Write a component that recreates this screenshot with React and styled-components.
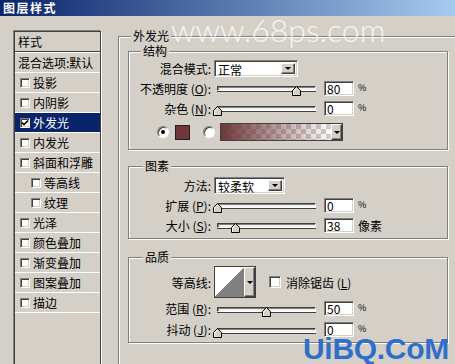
import React from "react";
import styled, { createGlobalStyle } from "styled-components";

const GlobalStyle = createGlobalStyle`
  html, body { margin: 0; padding: 0; background: #d4d0c8; }
  body {
    font-family: "Noto Sans CJK SC", "DejaVu Sans", sans-serif;
    font-size: 12px;
    color: #000;
  }
`;

const Window = styled.div`
  position: relative;
  width: 455px;
  height: 364px;
  overflow: hidden;
  background: #d4d0c8;
`;

const TitleBar = styled.div`
  display: flex;
  align-items: center;
  height: 16px;
  padding-left: 3px;
  background: linear-gradient(to right, #0a246a, #a6caf0);
  color: #fff;
  font-weight: bold;
  font-size: 12px;
  letter-spacing: 1.5px;
  line-height: 16px;
`;

const Body = styled.div`
  display: flex;
  align-items: flex-start;
  padding: 15px 0 0 14px;
`;

const StyleList = styled.div`
  flex: none;
  width: 85px;
  height: 340px;
  border: 1px solid #404040;
  box-shadow: -1px -1px 0 #808080, 1px 1px 0 #fff;
`;

const ListHeader = styled.div`
  height: 19px;
  line-height: 19px;
  padding-left: 3px;
  border-bottom: 1px solid #404040;
  box-shadow: 0 1px 0 #fff;
  margin-bottom: 1px;
`;

const ListItem = styled.div`
  display: flex;
  align-items: center;
  height: 19px;
  padding-left: ${(p) => p.$indent}px;
  border-bottom: 1px solid #fff;
  white-space: nowrap;
  background: ${(p) => (p.$active ? "#0a246a" : "transparent")};
  color: ${(p) => (p.$active ? "#fff" : "#000")};
`;

const Box = styled.span`
  flex: none;
  display: inline-flex;
  align-items: center;
  justify-content: center;
  box-sizing: border-box;
  width: ${(p) => p.$size}px;
  height: ${(p) => p.$size}px;
  margin-right: ${(p) => p.$gap}px;
  background: #fff;
  border: 1px solid;
  border-color: #808080 #fff #fff #808080;
  box-shadow: inset 1px 1px 0 #404040, inset -1px -1px 0 #d4d0c8;
`;

const Panel = styled.fieldset`
  flex: none;
  margin: -1px 0 0 17px;
  padding: 0 0 0 9px;
  width: 352px;
  height: 400px;
  min-width: 0;
  border: 1px solid #808080;
  box-shadow: inset 1px 1px 0 #fff, 1px 1px 0 #fff;
`;

const Legend = styled.legend`
  margin-left: ${(p) => p.$offset}px;
  padding: 0 2px;
  line-height: 12px;
  background: #d4d0c8;
`;

const Group = styled.fieldset`
  margin: ${(p) => p.$top}px 0 0 0;
  padding: ${(p) => p.$pt}px 0 ${(p) => p.$pb}px 0;
  width: 318px;
  min-width: 0;
  border: 1px solid #808080;
  box-shadow: inset 1px 1px 0 #fff, 1px 1px 0 #fff;
`;

const Row = styled.div`
  display: flex;
  align-items: center;
  height: ${(p) => p.$h || 20}px;
`;

const Label = styled.span`
  flex: none;
  width: 82px;
  margin-right: 3px;
  text-align: right;
  white-space: nowrap;
`;

const Select = styled.div`
  flex: none;
  display: flex;
  box-sizing: border-box;
  width: ${(p) => p.$w}px;
  height: 17px;
  padding: 2px;
  background: #fff;
  border: 1px solid;
  border-color: #808080 #fff #fff #808080;
  box-shadow: inset 1px 1px 0 #404040, inset -1px -1px 0 #d4d0c8;
`;

const SelectText = styled.span`
  flex: 1;
  line-height: 13px;
  padding-left: 1px;
`;

const DropButton = styled.span`
  flex: none;
  display: flex;
  align-items: center;
  justify-content: center;
  box-sizing: border-box;
  width: ${(p) => p.$w || 14}px;
  background: #d4d0c8;
  border: 1px solid;
  border-color: #fff #404040 #404040 #fff;
  box-shadow: inset -1px -1px 0 #808080;
  &::after {
    content: "";
    border-left: 3px solid transparent;
    border-right: 3px solid transparent;
    border-top: 3px solid #000;
  }
`;

const Slider = styled.div`
  flex: none;
  position: relative;
  width: 106px;
  height: 20px;
  margin-right: 4px;
`;

const Track = styled.div`
  box-sizing: border-box;
  width: 99px;
  height: 5px;
  margin: 8px 0 0 3px;
  background: #f2f2f2;
  border: 1px solid;
  border-color: #404040 #fff #fff #404040;
  box-shadow: inset 1px 1px 0 #808080, 0 1px 0 #404040;
`;

const Thumb = styled.svg`
  position: absolute;
  top: 8px;
  width: 9px;
  height: 10px;
`;

const NumberBox = styled.div`
  flex: none;
  box-sizing: border-box;
  width: 30px;
  height: 15px;
  padding-left: 2px;
  line-height: 13px;
  background: #fff;
  border: 1px solid;
  border-color: #808080 #fff #fff #808080;
  box-shadow: inset 1px 1px 0 #404040, inset -1px -1px 0 #d4d0c8;
`;

const Unit = styled.span`
  margin-left: 4px;
  font-size: ${(p) => (p.$small ? 9 : 12)}px;
  align-self: ${(p) => (p.$small ? "flex-start" : "center")};
  margin-top: ${(p) => (p.$small ? 3 : 0)}px;
`;

const ColorRow = styled.div`
  display: flex;
  align-items: center;
  height: 18px;
  margin-top: 5px;
  padding-left: 28px;
`;

const Radio = styled.span`
  flex: none;
  position: relative;
  box-sizing: border-box;
  width: 12px;
  height: 12px;
  margin-right: ${(p) => p.$gap}px;
  border-radius: 50%;
  background: #fff;
  border: 1px solid;
  border-color: #808080 #fff #fff #808080;
  box-shadow: inset 1px 1px 0 #404040;
  &::after {
    content: "";
    display: ${(p) => (p.$on ? "block" : "none")};
    position: absolute;
    left: 3px;
    top: 3px;
    width: 4px;
    height: 4px;
    border-radius: 50%;
    background: #000;
  }
`;

const Swatch = styled.span`
  flex: none;
  box-sizing: border-box;
  width: 15px;
  height: 15px;
  margin-right: 13px;
  background: #6e383a;
  border: 1px solid #202020;
`;

const GradientPicker = styled.div`
  flex: none;
  display: flex;
  box-sizing: border-box;
  width: 123px;
  height: 18px;
  border: 1px solid #404040;
`;

const GradientFill = styled.span`
  flex: 1;
  background-image: linear-gradient(to right, #6e383a, rgba(110, 56, 58, 0)),
    conic-gradient(#cfcfcf 25%, #fff 0 50%, #cfcfcf 0 75%, #fff 0);
  background-size: 100% 100%, 10px 10px;
`;

const ContourPicker = styled.div`
  flex: none;
  display: flex;
  box-sizing: border-box;
  width: 42px;
  height: 32px;
  margin-right: 13px;
  border: 1px solid #404040;
`;

const ContourPreview = styled.span`
  flex: 1;
  background: linear-gradient(to bottom right, #fff 50%, #808080 50%);
`;

const Watermark = styled.div`
  position: absolute;
  left: 171px;
  top: 14px;
  font-family: "Lato", "DejaVu Sans", sans-serif;
  font-weight: 300;
  font-size: 32px;
  line-height: 32px;
  color: rgba(255, 255, 255, 0.8);
  white-space: nowrap;
  pointer-events: none;
`;

const SiteMark = styled.div`
  position: absolute;
  left: 303px;
  top: 337px;
  font-family: "Liberation Sans", "DejaVu Sans", sans-serif;
  font-weight: bold;
  font-size: 30px;
  line-height: 24px;
  letter-spacing: -0.3px;
  color: #2f6fc9;
  white-space: nowrap;
  pointer-events: none;
`;

const effects = [
  { name: "投影" },
  { name: "内阴影" },
  { name: "外发光", checked: true, active: true },
  { name: "内发光" },
  { name: "斜面和浮雕" },
  { name: "等高线", sub: true },
  { name: "纹理", sub: true },
  { name: "光泽" },
  { name: "颜色叠加" },
  { name: "渐变叠加" },
  { name: "图案叠加" },
  { name: "描边" },
];

function Check() {
  return (
    <svg width="8" height="8" viewBox="0 0 8 8">
      <path d="M1 3.5 L3 5.5 L7 1.5" fill="none" stroke="#000" strokeWidth="1.6" />
    </svg>
  );
}

function RangeSlider({ pos }) {
  return (
    <Slider>
      <Track />
      <Thumb viewBox="0 0 9 10" style={{ left: 3 + pos * 98 - 4.5 }}>
        <polygon points="4.5,0.5 8.5,4.5 8.5,9.5 0.5,9.5 0.5,4.5" fill="#d4d0c8" stroke="#000" />
        <polyline points="1.5,9 1.5,5 4.5,2" fill="none" stroke="#fff" />
      </Thumb>
    </Slider>
  );
}

function SliderRow({ label, mnemonic, pos, value, unit, h }) {
  return (
    <Row $h={h}>
      <Label>
        {label} (<u>{mnemonic}</u>):
      </Label>
      <RangeSlider pos={pos} />
      <NumberBox>{value}</NumberBox>
      <Unit $small={unit === "%"}>{unit}</Unit>
    </Row>
  );
}

export default function App() {
  return (
    <>
      <GlobalStyle />
      <Window>
        <TitleBar>图层样式</TitleBar>
        <Body>
          <StyleList>
            <ListHeader>样式</ListHeader>
            <ListItem $indent={3}>混合选项:默认</ListItem>
            {effects.map((e) => (
              <ListItem key={e.name} $indent={e.sub ? 16 : 5} $active={e.active}>
                <Box $size={10} $gap={3}>{e.checked && <Check />}</Box>
                {e.name}
              </ListItem>
            ))}
          </StyleList>

          <Panel>
            <Legend $offset={3}>外发光</Legend>

            <Group $top={3} $pt={1} $pb={8}>
              <Legend $offset={12}>结构</Legend>
              <Row>
                <Label>混合模式:</Label>
                <Select $w={84}>
                  <SelectText>正常</SelectText>
                  <DropButton />
                </Select>
              </Row>
              <SliderRow label="不透明度" mnemonic="O" pos={0.816} value="80" unit="%" />
              <SliderRow label="杂色" mnemonic="N" pos={0} value="0" unit="%" />
              <ColorRow>
                <Radio $on $gap={6} />
                <Swatch />
                <Radio $gap={5} />
                <GradientPicker>
                  <GradientFill />
                  <DropButton $w={11} />
                </GradientPicker>
              </ColorRow>
            </Group>

            <Group $top={10} $pt={3} $pb={3}>
              <Legend $offset={14}>图素</Legend>
              <Row>
                <Label>方法:</Label>
                <Select $w={71}>
                  <SelectText>较柔软</SelectText>
                  <DropButton />
                </Select>
              </Row>
              <SliderRow label="扩展" mnemonic="P" pos={0} value="0" unit="%" />
              <SliderRow label="大小" mnemonic="S" pos={0.19} value="38" unit="像素" />
            </Group>

            <Group $top={12} $pt={3} $pb={2}>
              <Legend $offset={14}>品质</Legend>
              <Row $h={32}>
                <Label>等高线:</Label>
                <ContourPicker>
                  <ContourPreview />
                  <DropButton $w={11} />
                </ContourPicker>
                <Box $size={12} $gap={5} />
                <span>
                  消除锯齿 (<u>L</u>)
                </span>
              </Row>
              <SliderRow label="范围" mnemonic="R" pos={0.5} value="50" unit="%" h={21} />
              <SliderRow label="抖动" mnemonic="J" pos={0} value="0" unit="%" h={21} />
            </Group>
          </Panel>
        </Body>
        <Watermark>www.68ps.com</Watermark>
        <SiteMark>UiBQ.CoM</SiteMark>
      </Window>
    </>
  );
}
